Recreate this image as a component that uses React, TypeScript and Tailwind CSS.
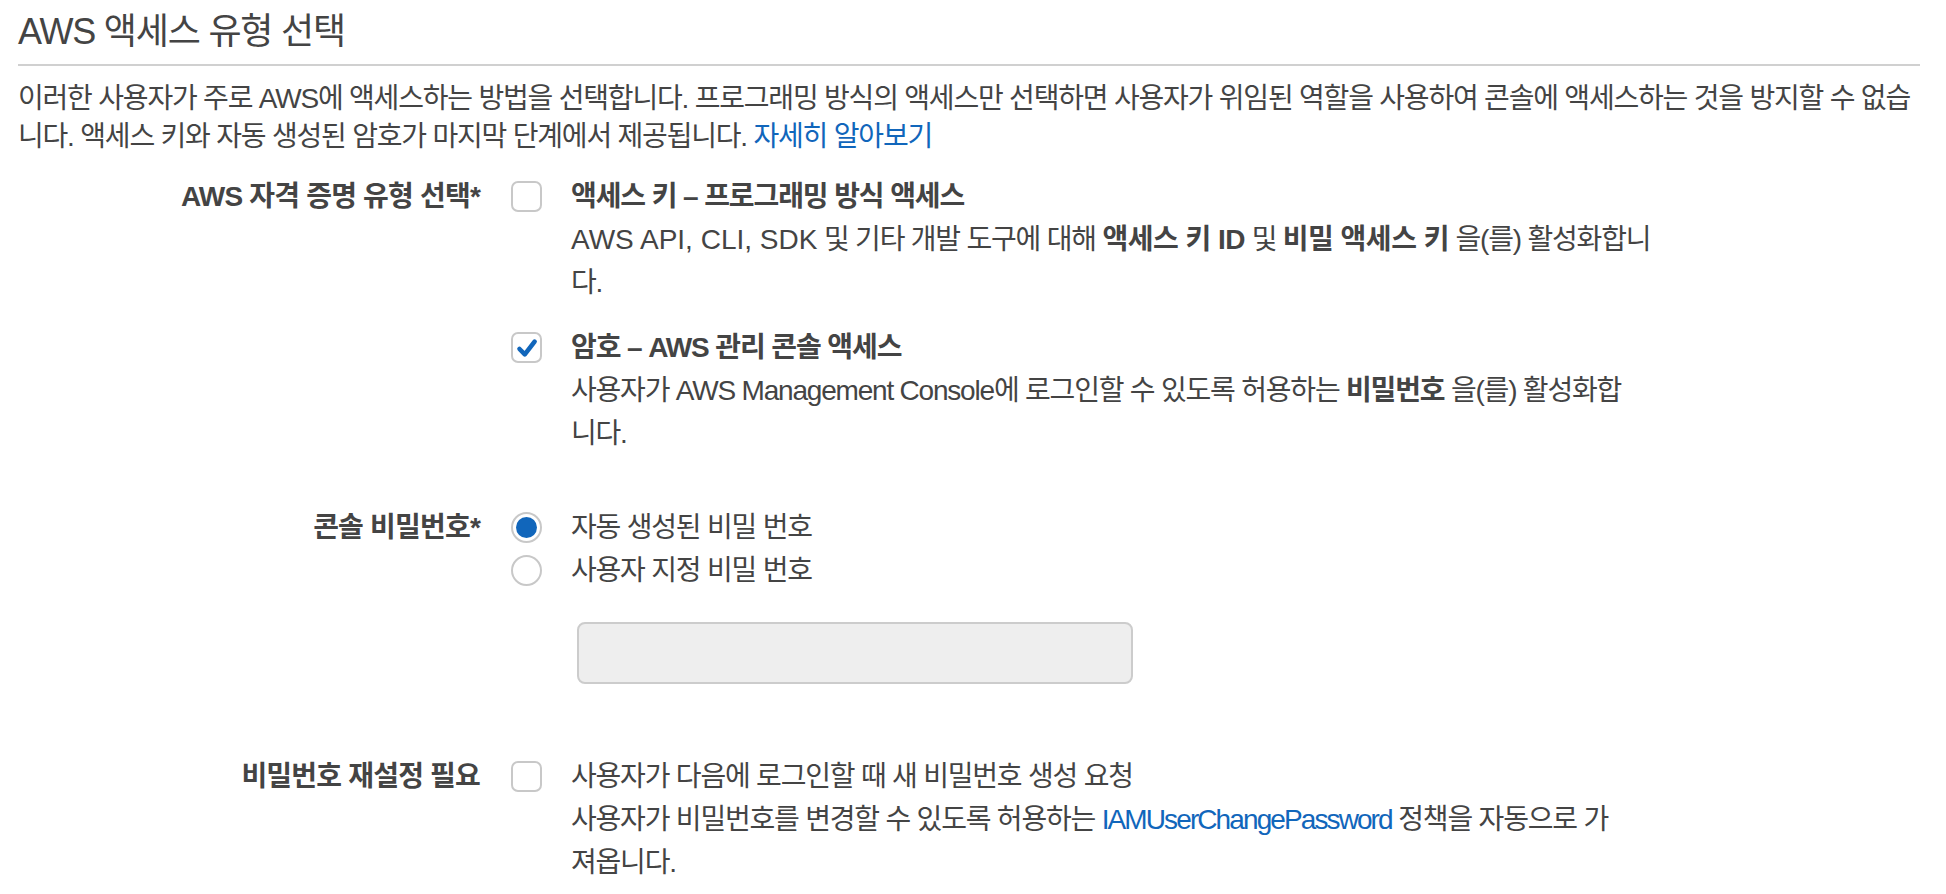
import React from "react";

const FONT = { fontFamily: '"Liberation Sans", "Noto Sans CJK KR", sans-serif' };

function Checkbox({ checked = false }: { checked?: boolean }) {
  return (
    <div className="mt-[6px] flex h-[31px] w-[31px] shrink-0 items-center justify-center rounded-[7px] border-2 border-[#c8c8c8] bg-white">
      {checked && (
        <svg width="24" height="24" viewBox="0 0 24 24">
          <path d="M4.5 13 L9.8 18.4 L19.6 5.6" fill="none" stroke="#1166bb" strokeWidth="4.6" strokeLinecap="round" strokeLinejoin="round" />
        </svg>
      )}
    </div>
  );
}

function Radio({ checked = false }: { checked?: boolean }) {
  return (
    <div className="mt-[6px] flex h-[31px] w-[31px] shrink-0 items-center justify-center rounded-full border-2 border-[#c8c8c8] bg-white">
      {checked && <div className="h-[21px] w-[21px] rounded-full bg-[#1166bb]" />}
    </div>
  );
}

function Line({ children }: { children: React.ReactNode }) {
  return <div className="whitespace-nowrap">{children}</div>;
}

function Label({ children }: { children: React.ReactNode }) {
  return <div className="w-[462px] shrink-0 text-right font-bold tracking-[-0.8px]">{children}</div>;
}

export default function App() {
  return (
    <div className="min-h-screen bg-white text-[#444] text-[28px] leading-[43px]" style={FONT}>
      <div className="w-[1920px] pl-[18px]">
        <h1 className="pt-[12px] text-[36px] leading-[40px] font-normal tracking-[-1.2px] text-[#444]">AWS 액세스 유형 선택</h1>
        <div className="mt-[12px] h-[2px] bg-[#d0d0d0]" />
        <div className="mt-[14px] leading-[38px] tracking-[-1.2px]">
          <Line>
            이러한 사용자가 주로 AWS에 액세스하는 방법을 선택합니다. 프로그래밍 방식의 액세스만 선택하면 사용자가 위임된 역할을 사용하여 콘솔에 액세스하는 것을 방지할 수 없습
          </Line>
          <Line>
            니다. 액세스 키와 자동 생성된 암호가 마지막 단계에서 제공됩니다. <a className="text-[#1166bb]">자세히 알아보기</a>
          </Line>
        </div>

        {/* Row 1 */}
        <div className="mt-[19px] flex">
          <Label>AWS 자격 증명 유형 선택*</Label>
          <div className="ml-[31px] flex flex-col">
            <div className="flex">
              <Checkbox />
              <div className="ml-[29px] tracking-[-1.2px]">
                <Line>
                  <span className="font-bold tracking-[-1.1px]">액세스 키 – 프로그래밍 방식 액세스</span>
                </Line>
                <Line>
                  <span className="tracking-[0px]">AWS API, CLI, SDK</span> 및 기타 개발 도구에 대해{" "}
                  <span className="font-bold tracking-[-0.5px]">액세스 키 ID</span> 및{" "}
                  <span className="font-bold tracking-[-0.5px]">비밀 액세스 키</span> 을(를) 활성화합니
                </Line>
                <Line>다.</Line>
              </div>
            </div>
            <div className="mt-[22px] flex">
              <Checkbox checked />
              <div className="ml-[29px] tracking-[-1.2px]">
                <Line>
                  <span className="font-bold tracking-[-1.1px]">암호 – AWS 관리 콘솔 액세스</span>
                </Line>
                <Line>
                  사용자가 AWS Management Console에 로그인할 수 있도록 허용하는 <span className="font-bold">비밀번호</span> 을(를) 활성화합
                </Line>
                <Line>니다.</Line>
              </div>
            </div>
          </div>
        </div>

        {/* Row 2 */}
        <div className="mt-[51px] flex">
          <Label>콘솔 비밀번호*</Label>
          <div className="ml-[31px] flex flex-col">
            <div className="flex">
              <Radio checked />
              <div className="ml-[29px] tracking-[-1.2px]">
                <Line>자동 생성된 비밀 번호</Line>
              </div>
            </div>
            <div className="flex">
              <Radio />
              <div className="ml-[29px] tracking-[-1.2px]">
                <Line>사용자 지정 비밀 번호</Line>
              </div>
            </div>
            <div className="ml-[66px] mt-[30px] h-[62px] w-[556px] rounded-[8px] border-2 border-[#cccccc] bg-[#eeeeee]" />
          </div>
        </div>

        {/* Row 3 */}
        <div className="mt-[71px] flex">
          <Label>비밀번호 재설정 필요</Label>
          <div className="ml-[31px] flex">
            <Checkbox />
            <div className="ml-[29px] tracking-[-1.2px]">
              <Line>사용자가 다음에 로그인할 때 새 비밀번호 생성 요청</Line>
              <Line>
                사용자가 비밀번호를 변경할 수 있도록 허용하는{" "}
                <a className="text-[#1166bb] tracking-[-1.9px]">IAMUserChangePassword</a> 정책을 자동으로 가
              </Line>
              <Line>져옵니다.</Line>
            </div>
          </div>
        </div>
      </div>
    </div>
  );
}
